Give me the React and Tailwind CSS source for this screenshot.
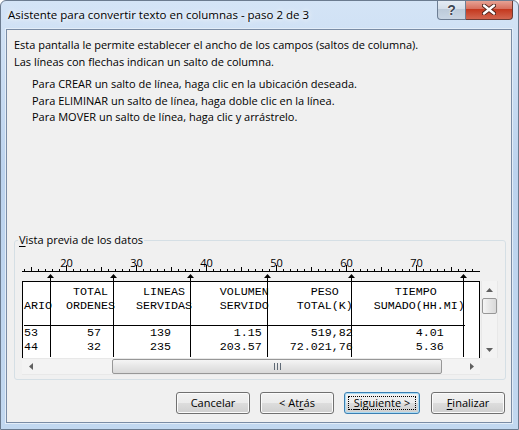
import React from 'react'

const place = (parts) => parts.reduce((s, [col, text]) => s.padEnd(col, ' ') + text, '')

const header = [
  place([[7, 'TOTAL'], [17, 'LINEAS'], [28, 'VOLUMEN'], [41, 'PESO'], [53, 'TIEMPO']]),
  place([[0, 'ARIO'], [6, 'ORDENES'], [16, 'SERVIDAS'], [28, 'SERVIDO'], [39, 'TOTAL(K)'], [50, 'SUMADO(HH.MI)']]),
]

const data = [
  place([[0, '53'], [9, '57'], [18, '139'], [30, '1.15'], [41, '519,82'], [56, '4.01']]),
  place([[0, '44'], [9, '32'], [18, '235'], [28, '203.57'], [38, '72.021,76'], [56, '5.36']]),
]

// column breaks, x relative to the preview box
const breaks = [28, 91, 168, 245, 329, 441]
const ticks = []
for (let n = 14; n <= 78; n++) ticks.push(n)
const tickX = (n) => 7 * n - 96

function Arrow({ dir }) {
  const pts = {
    up: '0,4 7,4 3.5,0',
    down: '0,0 7,0 3.5,4',
    left: '4,0 4,7 0,3.5',
    right: '0,0 0,7 4,3.5',
  }[dir]
  const vert = dir === 'up' || dir === 'down'
  return (
    <svg width={vert ? 7 : 4} height={vert ? 4 : 7}>
      <polygon points={pts} fill="#606060" />
    </svg>
  )
}

function Button({ children, width, focused, className = '' }) {
  return (
    <div
      className={`relative flex h-[22px] items-center justify-center rounded-[3px] border text-[11px] text-black ${width} ${className} ${
        focused
          ? 'border-[#3c7fb1] bg-[linear-gradient(to_bottom,#f2f2f2_0%,#ebebeb_50%,#dddddd_50%,#cfcfcf_100%)] shadow-[inset_0_0_0_1px_#a9dcf6]'
          : 'border-[#707070] bg-[linear-gradient(to_bottom,#f2f2f2_0%,#ebebeb_50%,#dddddd_50%,#cfcfcf_100%)] shadow-[inset_0_0_0_1px_#fbfbfb]'
      }`}
    >
      {focused && <div className="absolute inset-[3px] border border-dotted border-black" />}
      <span className="relative">{children}</span>
    </div>
  )
}

export default function App() {
  return (
    <div className="relative h-[430px] w-[519px] overflow-hidden rounded-t-[6px] border border-[#6b7b8f] bg-[linear-gradient(to_bottom,#d4e4f6,#bcd3ee_40%,#c2d8f0)] font-['Open_Sans',sans-serif] text-black">
      {/* title bar */}
      <div className="flex h-[28px]">
        <div className="pl-[7px] pt-[6px] text-[11.5px] leading-[16px] [text-shadow:0_0_8px_#ffffff,0_0_4px_#ffffff]">
          Asistente para convertir texto en columnas - paso 2 de 3
        </div>
        <div className="-mt-px ml-auto mr-[5px] flex h-[20px]">
          <div className="flex w-[29px] items-center justify-center rounded-bl-[4px] border border-t-0 border-[#6d7e94] bg-[linear-gradient(to_bottom,#e6edf5,#d3dde9_50%,#bccad9_50%,#c9d6e4)] font-['Liberation_Sans',sans-serif] text-[14px] font-bold leading-none text-[#3d4652] [text-shadow:0_0_1px_#ffffff,0_0_2px_#ffffff]">
            ?
          </div>
          <div className="flex w-[47px] items-center justify-center rounded-br-[4px] border border-l-0 border-t-0 border-[#6e3b33] bg-[linear-gradient(to_bottom,#e9a99b,#d8715f_45%,#c4391f_50%,#d26650)]">
            <svg width="14" height="11" viewBox="0 0 14 11">
              <path d="M2 1.5 L12 9.5 M12 1.5 L2 9.5" stroke="#4b2119" strokeWidth="4.2" strokeLinecap="round" />
              <path d="M2 1.5 L12 9.5 M12 1.5 L2 9.5" stroke="#ffffff" strokeWidth="2.4" strokeLinecap="round" />
            </svg>
          </div>
        </div>
      </div>

      {/* client area */}
      <div className="ml-[5px] mr-[6px] flex h-[394px] flex-col border border-[#7a8ca5] bg-[#f0f0f0] shadow-[0_0_0_1px_#e3edf8]">
        <div className="h-[210px] pl-[7px] pt-[7px] text-[11px] leading-[16.5px]">
          <p>Esta pantalla le permite establecer el ancho de los campos (saltos de columna).</p>
          <p>Las líneas con flechas indican un salto de columna.</p>
          <div className="mt-[6px] pl-[18px]">
            <p>Para CREAR un salto de línea, haga clic en la ubicación deseada.</p>
            <p>Para ELIMINAR un salto de línea, haga doble clic en la línea.</p>
            <p>Para MOVER un salto de línea, haga clic y arrástrelo.</p>
          </div>
        </div>

        {/* group box */}
        <div className="relative ml-[7px] h-[140px] w-[492px] rounded-[3px] border border-[#d5dfe5]">
          <div className="absolute left-[3px] top-[-9px] bg-[#f0f0f0] px-px text-[11px] leading-[16px]">
            <span className="underline underline-offset-2">V</span>ista previa de los datos
          </div>

          <div className="relative ml-[7px] mt-[14px] w-[476px]">
            {/* ruler numbers */}
            <div className="relative h-[26px] text-[11px] leading-[14px]">
              {ticks
                .filter((n) => n % 10 === 0)
                .map((n) => (
                  <span key={n} className="absolute top-px -translate-x-1/2" style={{ left: tickX(n) + 0.5 }}>
                    {n}
                  </span>
                ))}
            </div>

            <div className="flex">
              <div className="h-[77px] w-[458px] border-x border-t border-black bg-white pl-px pt-[3px] font-['Liberation_Mono',monospace] text-[11.67px] leading-[14px]">
                {header.map((r, i) => (
                  <div key={i} className="h-[14px] whitespace-pre">{r}</div>
                ))}
                <div className="h-[13px] w-[441px] border-b border-black" />
                {data.map((r, i) => (
                  <div key={i} className="h-[14px] whitespace-pre">{r}</div>
                ))}
              </div>

              {/* vertical scrollbar */}
              <div className="ml-px flex h-[77px] w-[17px] flex-col bg-[#f3f3f3] shadow-[inset_1px_0_0_#e8e8e8,inset_-1px_0_0_#e8e8e8]">
                <div className="flex h-[17px] items-center justify-center">
                  <Arrow dir="up" />
                </div>
                <div className="mx-px h-[16px] rounded-[2px] border border-[#979797] bg-[linear-gradient(to_right,#f5f5f5,#e6e6e6_50%,#d9d9d9)]" />
                <div className="flex-1" />
                <div className="flex h-[17px] items-center justify-center">
                  <Arrow dir="down" />
                </div>
              </div>
            </div>

            {/* horizontal scrollbar */}
            <div className="flex h-[17px] w-[458px] bg-[#f3f3f3] shadow-[inset_0_1px_0_#e8e8e8,inset_0_-1px_0_#e8e8e8]">
              <div className="flex w-[17px] items-center justify-center">
                <Arrow dir="left" />
              </div>
              <div className="ml-[73px] my-px flex w-[330px] items-center justify-center rounded-[2px] border border-[#979797] bg-[linear-gradient(to_bottom,#f5f5f5,#e6e6e6_50%,#d9d9d9)]">
                <svg width="7" height="7">
                  <path d="M0.5 0 V7 M3.5 0 V7 M6.5 0 V7" stroke="#5f6a76" strokeWidth="1" />
                </svg>
              </div>
              <div className="ml-auto flex w-[17px] items-center justify-center">
                <Arrow dir="right" />
              </div>
            </div>

            {/* ruler line, ticks and column breaks */}
            <svg width="458" height="103" className="pointer-events-none absolute left-0 top-0">
              <line x1="0" x2="458" y1="16.5" y2="16.5" stroke="#000" />
              {ticks.map((n) => {
                const h = n % 10 === 0 ? 6 : n % 5 === 0 ? 4 : 2
                return <line key={n} x1={tickX(n) + 0.5} x2={tickX(n) + 0.5} y1={16 - h} y2={16} stroke="#000" />
              })}
              {breaks.map((x) => (
                <g key={x}>
                  <polygon points={`${x - 3},23 ${x + 4},23 ${x + 0.5},19`} fill="#000" />
                  <line x1={x + 0.5} x2={x + 0.5} y1="23" y2="102" stroke="#000" />
                </g>
              ))}
            </svg>
          </div>
        </div>

        {/* buttons */}
        <div className="mt-[12px] flex justify-end pr-[6px]">
          <Button width="w-[74px]">Cancelar</Button>
          <Button width="w-[74px]" className="ml-[10px]">
            &lt; At<span className="underline underline-offset-2">r</span>ás
          </Button>
          <Button width="w-[76px]" className="ml-[10px]" focused>
            <span className="underline underline-offset-2">S</span>iguiente &gt;
          </Button>
          <Button width="w-[74px]" className="ml-[11px]">
            <span className="underline underline-offset-2">F</span>inalizar
          </Button>
        </div>
      </div>
    </div>
  )
}
